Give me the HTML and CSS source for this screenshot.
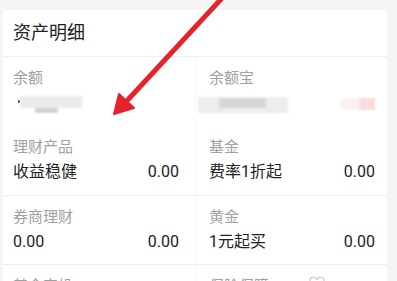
FILE: index.html
```html
<!DOCTYPE html>
<html lang="zh">
<head>
<meta charset="utf-8">
<link rel="stylesheet" href="styles.css">
</head>
<body>
<div class="card">
  <div class="card-title">资产明细</div>
  <div class="grid">
    <div class="cell">
      <div class="label">余额</div>
      <div class="value"><span class="mark"></span><span class="blur blur-left"></span></div>
    </div>
    <div class="cell right">
      <div class="label">余额宝</div>
      <div class="value"><span class="blur blur-right"></span><span class="blur blur-pink"></span></div>
    </div>
    <div class="cell">
      <div class="label">理财产品</div>
      <div class="value"><span>收益稳健</span><span>0.00</span></div>
    </div>
    <div class="cell right">
      <div class="label">基金</div>
      <div class="value"><span>费率1折起</span><span>0.00</span></div>
    </div>
    <div class="cell divided">
      <div class="label">券商理财</div>
      <div class="value"><span>0.00</span><span>0.00</span></div>
    </div>
    <div class="cell right divided">
      <div class="label">黄金</div>
      <div class="value"><span>1元起买</span><span>0.00</span></div>
    </div>
    <div class="cell divided">
      <div class="label">基金定投</div>
    </div>
    <div class="cell right divided">
      <div class="label">保险保障<svg class="heart" width="16" height="14" viewBox="0 0 16 14"><path d="M8 13 C3 9 1 7 1 4.5 C1 2.5 2.6 1 4.5 1 C6 1 7.3 2 8 3.2 C8.7 2 10 1 11.5 1 C13.4 1 15 2.5 15 4.5 C15 7 13 9 8 13 Z" fill="none" stroke="#c8c8c8" stroke-width="1.2"/></svg></div>
    </div>
  </div>
</div>
<svg class="arrow" width="397" height="281" viewBox="0 0 397 281">
  <line x1="223" y1="-3" x2="124" y2="104" stroke="#e8222a" stroke-width="5" stroke-linecap="round"/>
  <polygon points="114,114 119,94 134,108" fill="#e8222a" stroke="#e8222a" stroke-width="2" stroke-linejoin="round"/>
</svg>
</body>
</html>
```
FILE: styles.css
```css
html, body {
  margin: 0;
  padding: 0;
}
body {
  background: #f5f5f5;
  font-family: "Roboto", "Noto Sans CJK SC", sans-serif;
  width: 397px;
  height: 281px;
  overflow: hidden;
  position: relative;
}
.card {
  margin: 10px 10px 0 3px;
  background: #fff;
  border-radius: 4px;
  height: 300px;
}
.card-title {
  height: 46px;
  line-height: 46px;
  padding-left: 10px;
  font-size: 18px;
  color: #222;
  border-bottom: 1px solid #efefef;
}
.grid {
  display: grid;
  grid-template-columns: 192px 192px;
}
.cell {
  height: 69px;
  box-sizing: border-box;
  padding: 11px 16px 0 10px;
}
.cell.right {
  padding-left: 13px;
  padding-right: 12px;
  border-left: 1px solid #f8f8f8;
}
.cell.divided {
  border-top: 1px solid #eeeeee;
}
.label {
  font-size: 15px;
  line-height: 20px;
  color: #a0a0a0;
  display: flex;
  align-items: center;
}
.value {
  margin-top: 3px;
  font-size: 16px;
  line-height: 24px;
  color: #222;
  display: flex;
  justify-content: space-between;
  align-items: flex-start;
  height: 24px;
}
.blur {
  display: block;
  filter: blur(1.2px);
}
.mark {
  display: block;
  width: 2px;
  height: 3px;
  margin: 9px 0 0 5px;
  background: #555;
}
.blur-left {
  width: 62px;
  height: 17px;
  margin: 5px auto 0 0;
  background:
    linear-gradient(#d2d2d2, #d2d2d2) 15px 12px / 23px 5px no-repeat,
    linear-gradient(#ebebeb, #ebebeb) 0 0 / 62px 12px no-repeat;
}
.blur-right {
  width: 90px;
  height: 16px;
  margin: 6px 0 0 -11px;
  background:
    linear-gradient(#d6d6d6, #d6d6d6) 21px 1px / 47px 10px no-repeat,
    #ededed;
}
.blur-pink {
  width: 35px;
  height: 12px;
  margin: 7px 0 0 0;
  background:
    linear-gradient(#fbdada, #fbdada) 20px 0 / 15px 12px no-repeat,
    #fdf0f0;
}
.heart {
  margin-left: 40px;
  margin-top: -6px;
}
.arrow {
  position: absolute;
  left: 0;
  top: 0;
  pointer-events: none;
}
```
